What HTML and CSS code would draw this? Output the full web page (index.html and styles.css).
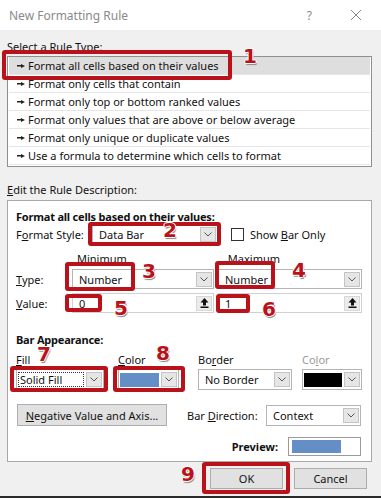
FILE: index.html
```html
<!DOCTYPE html>
<html lang="en">
  <head>
    <meta charset="UTF-8">
    <title>New Formatting Rule</title>
    <link rel="stylesheet" href="styles.css">
  </head>
  <body>
    <div id="dialog">
      <div class="titlebar">
        <span class="title">New Formatting Rule</span>
        <span class="tb-help">?</span>
        <span class="tb-close">
          <svg width="12" height="12" viewBox="0 0 12 12"><path d="M1 1L11 11M11 1L1 11" stroke="#8a8a8a" stroke-width="1" fill="none"/></svg>
        </span>
      </div>

      <div class="content">
        <div class="section-label label-rule-type">Select a Rule Type:</div>
        <ul class="rule-list">
          <li class="selected"><i class="pointer"></i>Format all cells based on their values</li>
          <li><i class="pointer"></i>Format only cells that contain</li>
          <li><i class="pointer"></i>Format only top or bottom ranked values</li>
          <li><i class="pointer"></i>Format only values that are above or below average</li>
          <li><i class="pointer"></i>Format only unique or duplicate values</li>
          <li><i class="pointer"></i>Use a formula to determine which cells to format</li>
        </ul>

        <div class="section-label label-edit"><u>E</u>dit the Rule Description:</div>
        <div class="desc-panel">
          <div class="panel-title">Format all cells based on their values:</div>

          <div class="row style-row">
            <span class="row-label">F<u>o</u>rmat Style:</span>
            <div class="combo combo-style"><span class="combo-text">Data Bar</span><span class="drop"></span></div>
            <span class="checkbox"></span>
            <span class="check-label">Show <u>B</u>ar Only</span>
          </div>

          <div class="row minmax-head">
            <span class="head-min">Minimum</span>
            <span class="head-max">Maximum</span>
          </div>

          <div class="row type-row">
            <span class="row-label"><u>T</u>ype:</span>
            <div class="combo combo-min"><span class="combo-text">Number</span><span class="drop"></span></div>
            <div class="combo combo-max"><span class="combo-text">Number</span><span class="drop"></span></div>
          </div>

          <div class="row value-row">
            <span class="row-label"><u>V</u>alue:</span>
            <div class="field field-min"><span class="combo-text">0</span><span class="pick"></span></div>
            <div class="field field-max"><span class="combo-text">1</span><span class="pick"></span></div>
          </div>

          <div class="panel-subtitle">Bar Appearance:</div>

          <div class="appearance">
            <div class="app-col col-fill">
              <span class="app-label"><u>F</u>ill</span>
              <div class="combo"><span class="combo-text focused">Solid Fill</span><span class="drop"></span></div>
            </div>
            <div class="app-col col-color">
              <span class="app-label"><u>C</u>olor</span>
              <div class="combo"><span class="swatch swatch-blue"></span><span class="drop"></span></div>
            </div>
            <div class="app-col col-border">
              <span class="app-label">Bo<u>r</u>der</span>
              <div class="combo"><span class="combo-text">No Border</span><span class="drop"></span></div>
            </div>
            <div class="app-col col-color2">
              <span class="app-label muted">Co<u>l</u>or</span>
              <div class="combo"><span class="swatch swatch-black"></span><span class="drop"></span></div>
            </div>
          </div>

          <div class="row axis-row">
            <button class="btn btn-axis"><u>N</u>egative Value and Axis...</button>
            <span class="dir-label">Bar <u>D</u>irection:</span>
            <div class="combo combo-dir"><span class="combo-text">Context</span><span class="drop"></span></div>
          </div>

          <div class="row preview-row">
            <span class="preview-label">Preview:</span>
            <div class="preview-box"><span class="preview-bar"></span></div>
          </div>
        </div>

        <div class="footer">
          <button class="btn btn-ok">OK</button>
          <button class="btn btn-cancel">Cancel</button>
        </div>
      </div>

      <!-- red callouts drawn over the dialog -->
      <div class="mark mark-1"></div><span class="num num-1">1</span>
      <div class="mark mark-2"></div><span class="num num-2">2</span>
      <div class="mark mark-3"></div><span class="num num-3">3</span>
      <div class="mark mark-4"></div><span class="num num-4">4</span>
      <div class="mark mark-5"></div><span class="num num-5">5</span>
      <div class="mark mark-6"></div><span class="num num-6">6</span>
      <div class="mark mark-7"></div><span class="num num-7">7</span>
      <div class="mark mark-8"></div><span class="num num-8">8</span>
      <div class="mark mark-9"></div><span class="num num-9">9</span>
    </div>
  </body>
</html>
```

FILE: styles.css
```css
* {
  box-sizing: border-box;
  margin: 0;
  padding: 0;
}

html, body {
  width: 381px;
  height: 498px;
  overflow: hidden;
  background-color: #f0f0f0;
}

#dialog {
  position: relative;
  width: 381px;
  height: 498px;
  background-color: #f0f0f0;
  border-bottom: 2px solid #2b2b2b;
  font-family: 'Noto Sans', sans-serif;
  font-size: 11px;
  color: #111;
}

u {
  text-decoration: underline;
  text-underline-offset: 1px;
}

/* title bar */
.titlebar {
  height: 30px;
  background-color: #fff;
  display: flex;
  align-items: center;
  padding-left: 9px;
}

.title {
  flex: 1;
  color: #8a8a8a;
  font-size: 12px;
}

.tb-help {
  color: #8a8a8a;
  font-size: 12px;
  margin-right: 38px;
}

.tb-close {
  display: flex;
  margin-right: 19px;
}

.content {
  padding: 0 9px 0 7px;
}

.section-label {
  height: 14px;
  line-height: 14px;
}

.label-rule-type {
  margin-top: 10px;
  margin-bottom: 2px;
}

/* rule type list */
.rule-list {
  list-style: none;
  background-color: #fff;
  border: 1px solid #8f8f8f;
  height: 111px;
  padding: 0 1px;
}

.rule-list li {
  height: 18px;
  line-height: 17px;
  border-bottom: 1px solid #e6e6e6;
  display: flex;
  align-items: center;
  padding-left: 8px;
}

.rule-list li.selected {
  background-color: #dedede;
}

.pointer {
  display: inline-block;
  width: 8px;
  height: 4px;
  margin-right: 3px;
  background: linear-gradient(#222, #222) left center / 5px 1.5px no-repeat;
  position: relative;
}

.pointer::after {
  content: '';
  position: absolute;
  right: 0;
  top: 0;
  border-left: 4px solid #222;
  border-top: 2px solid transparent;
  border-bottom: 2px solid transparent;
}

.label-edit {
  margin-top: 16px;
  margin-bottom: 3px;
}

/* description panel */
.desc-panel {
  background-color: #fff;
  border: 1px solid #a8a8a8;
  height: 262px;
  padding: 9px 9px 0 8px;
}

.panel-title, .panel-subtitle, .preview-label {
  font-weight: bold;
  height: 14px;
  line-height: 14px;
  letter-spacing: -0.2px;
}

.row {
  display: flex;
  align-items: center;
}

.row-label {
  width: 56px;
}

.combo, .field {
  display: flex;
  align-items: center;
  background-color: #fff;
  border: 1px solid #b4b4b4;
  height: 20px;
  padding: 1px;
}

.combo-text {
  flex: 1;
  padding-left: 5px;
  line-height: 15px;
}

.drop, .pick {
  width: 16px;
  height: 15px;
  background-color: #e6e6e6;
  border: 1px solid #c4c4c4;
  background-repeat: no-repeat;
  background-position: center;
}

.drop {
  background-image: url("data:image/svg+xml,%3Csvg xmlns='http://www.w3.org/2000/svg' width='8' height='5'%3E%3Cpath d='M0.5 0.5L4 4L7.5 0.5' stroke='%23555' fill='none'/%3E%3C/svg%3E");
}

.pick {
  background-image: url("data:image/svg+xml,%3Csvg xmlns='http://www.w3.org/2000/svg' width='9' height='10'%3E%3Cpath d='M4.5 0L8.5 4.5H6V7.5H3V4.5H0.5Z' fill='%23111'/%3E%3Crect x='0.5' y='8.5' width='8' height='1.5' fill='%23111'/%3E%3C/svg%3E");
}

.style-row {
  height: 20px;
}

.style-row .row-label {
  width: 76px;
}

.combo-style {
  width: 126px;
  height: 18px;
}

.checkbox {
  width: 13px;
  height: 13px;
  border: 1px solid #333;
  margin-left: 13px;
  margin-right: 6px;
}

.minmax-head {
  margin-top: 7px;
  height: 14px;
}

.head-min {
  margin-left: 61px;
}

.head-max {
  margin-left: 101px;
}

.type-row {
  margin-top: 4px;
}

.combo-min, .field-min {
  width: 142px;
}

.combo-max, .field-max {
  width: 144px;
  margin-left: 4px;
}

.value-row {
  margin-top: 4px;
}

.field {
  border-color: #d0d0d0;
}

.pick {
  border-color: #d8d8d8;
  background-color: #ececec;
}

.panel-subtitle {
  margin-top: 20px;
}

.appearance {
  display: flex;
  margin-top: 6px;
}

.app-col {
  display: flex;
  flex-direction: column;
}

.app-label {
  height: 14px;
  line-height: 14px;
  margin-bottom: 2px;
}

.appearance .combo {
  height: 21px;
}

.muted {
  color: #9a9a9a;
}

.col-fill {
  width: 102px;
}

.col-fill .combo {
  width: 88px;
}

.focused {
  outline: 1px dotted #333;
  outline-offset: -1px;
  margin-right: 2px;
  padding-left: 2px;
}

.col-color {
  width: 80px;
}

.col-color .combo {
  width: 61px;
}

.col-border {
  width: 104px;
}

.col-border .combo {
  width: 94px;
}

.col-color2 .combo {
  width: 60px;
}

.swatch {
  flex: 1;
  height: 14px;
  margin-right: 2px;
}

.swatch-blue {
  background-color: #638ec6;
}

.swatch-black {
  background-color: #000;
}

.axis-row {
  margin-top: 14px;
}

.btn {
  font: inherit;
  color: #111;
  background-color: #e1e1e1;
  border: 1px solid #adadad;
}

.btn-axis {
  width: 150px;
  height: 22px;
  margin-left: 1px;
}

.dir-label {
  margin-left: 20px;
  width: 79px;
}

.combo-dir {
  width: 95px;
  height: 21px;
}

.preview-row {
  justify-content: flex-end;
  margin-top: 11px;
  padding-right: 1px;
}

.preview-label {
  letter-spacing: 0;
}

.preview-box {
  width: 73px;
  height: 19px;
  border: 1px solid #9a9a9a;
  margin-left: 10px;
  padding: 2px 3px;
  display: flex;
}

.preview-bar {
  width: 49px;
  background-color: #638ec6;
}

.footer {
  display: flex;
  justify-content: flex-end;
  gap: 11px;
  margin-top: 6px;
  padding-right: 5px;
}

.btn-ok, .btn-cancel {
  width: 73px;
  height: 21px;
}

/* callouts */
.mark {
  position: absolute;
  border: 4px solid #b9121b;
  border-radius: 3px;
}

.num {
  position: absolute;
  font-family: 'DejaVu Sans', sans-serif;
  font-weight: bold;
  font-size: 20px;
  line-height: 20px;
  color: #b9121b;
  text-shadow: 1px 0 #fff, -1px 0 #fff, 0 1px #fff, 0 -1px #fff, 1px 2px 1px #888;
}

.mark-1 { left: 2px; top: 50px; width: 230px; height: 30px; }
.num-1 { left: 243px; top: 46px; }
.mark-2 { left: 88px; top: 222px; width: 133px; height: 24px; }
.num-2 { left: 163px; top: 220px; }
.mark-3 { left: 65px; top: 262px; width: 70px; height: 29px; }
.num-3 { left: 142px; top: 261px; }
.mark-4 { left: 215px; top: 261px; width: 60px; height: 28px; }
.num-4 { left: 292px; top: 260px; }
.mark-5 { left: 65px; top: 294px; width: 37px; height: 18px; }
.num-5 { left: 114px; top: 298px; }
.mark-6 { left: 216px; top: 294px; width: 34px; height: 19px; }
.num-6 { left: 262px; top: 299px; }
.mark-7 { left: 10px; top: 366px; width: 98px; height: 26px; }
.num-7 { left: 37px; top: 344px; }
.mark-8 { left: 113px; top: 366px; width: 72px; height: 26px; }
.num-8 { left: 156px; top: 343px; }
.mark-9 { left: 202px; top: 462px; width: 88px; height: 32px; }
.num-9 { left: 181px; top: 464px; }
```
